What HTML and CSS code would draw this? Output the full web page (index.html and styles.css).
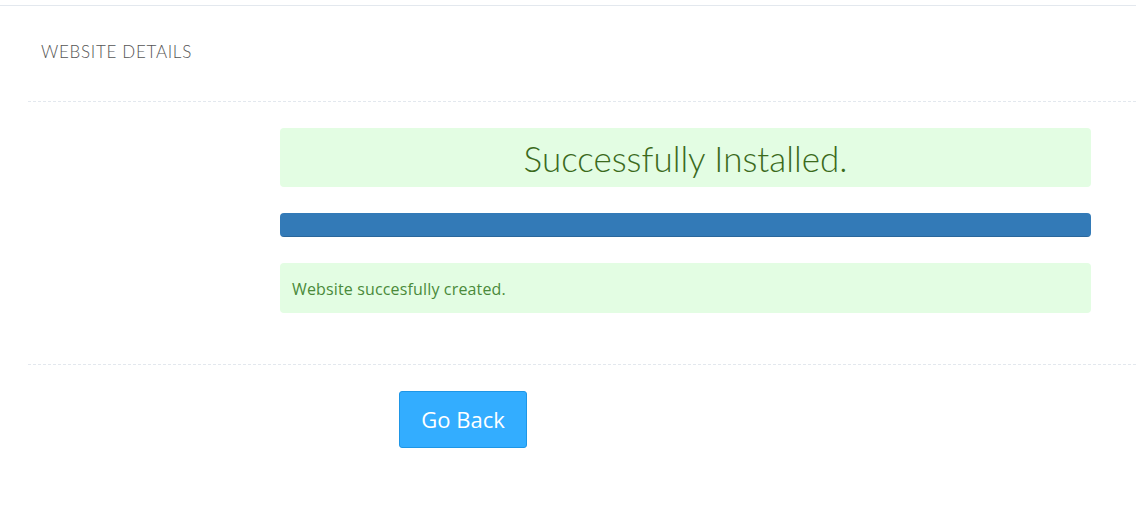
FILE: index.html
```html
<!DOCTYPE html>
<html>
<head>
<meta charset="utf-8">
<link rel="stylesheet" href="styles.css">
</head>
<body>
<div class="panel">
  <div class="panel-heading">WEBSITE DETAILS</div>
  <div class="panel-body">
    <div class="status">
      <div class="success-box">Successfully Installed.</div>
      <div class="progress"><div class="progress-bar" style="width:100%"></div></div>
      <div class="alert">Website succesfully created.</div>
    </div>
  </div>
  <div class="panel-footer">
    <button class="btn">Go Back</button>
  </div>
</div>
</body>
</html>
```
FILE: styles.css
```css
html, body { margin: 0; padding: 0; background: #fff; }
body { font-family: "Open Sans", "Liberation Sans", sans-serif; }
.panel { margin-top: 5px; border-top: 1px solid #e3e8ee; }
.panel-heading {
  margin-left: 28px;
  height: 91px;
  padding: 0 13px 4px;
  display: flex;
  align-items: center;
  border-bottom: 1px dashed #e3e8ee;
  font-family: Lato, "Open Sans", sans-serif;
  font-weight: 300;
  font-size: 17px;
  color: #555;
  letter-spacing: 0.7px;
}
.panel-body {
  margin-left: 28px;
  padding: 26px 0 51px 252px;
  border-bottom: 1px dashed #e3e8ee;
}
.status { width: 811px; display: flex; flex-direction: column; gap: 26px; }
.success-box {
  height: 59px;
  background: #e3fde3;
  border-radius: 4px;
  display: flex; align-items: center; justify-content: center;
  font-family: Lato, "Open Sans", sans-serif;
  font-weight: 300;
  font-size: 35px;
  color: #3b6a1c;
}
.progress { height: 24px; border-radius: 4px; overflow: hidden; background: #f5f5f5; }
.progress-bar { height: 100%; background: #337ab7; box-shadow: inset 0 -1px 0 rgba(0,0,0,.15); }
.alert {
  height: 50px;
  box-sizing: border-box;
  background: #e3fde3;
  border-radius: 4px;
  padding: 2px 12px 0;
  display: flex; align-items: center;
  font-size: 16px;
  letter-spacing: 0.15px;
  color: #4a8a3a;
}
.panel-footer { padding: 26px 0 0 399px; }
.btn {
  width: 128px; height: 57px;
  background: #33adff;
  border: 1px solid #1e96e6;
  border-radius: 3px;
  color: #fff;
  font-family: "Open Sans", sans-serif;
  font-size: 22px;
  padding: 0 0 2px;
  cursor: pointer;
}
```
